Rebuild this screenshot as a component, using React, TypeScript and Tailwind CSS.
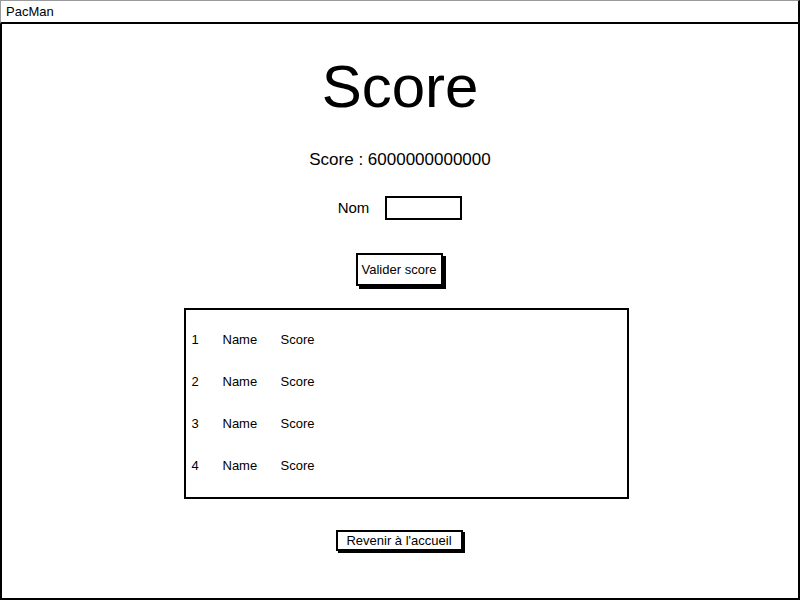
const FONT = { fontFamily: '"Liberation Sans", Arial, sans-serif' }

const ROWS = [1, 2, 3, 4]

export default function App() {
  return (
    <div className="w-[800px] h-[600px] bg-white text-black flex flex-col" style={FONT}>
      <div className="h-[24px] shrink-0 border-t border-l border-[#9a9a9a] border-r-2 border-r-black border-b-2 border-b-black flex items-center pl-[5px] text-[13px]">
        PacMan
      </div>
      <div className="flex-1 border-l-2 border-r-2 border-b-2 border-black flex flex-col items-center">
        <h1 className="mt-[31px] h-[64px] leading-[64px] text-[60px]">Score</h1>
        <p className="mt-[31px] h-[20px] leading-[20px] text-[17px]">Score : 6000000000000</p>
        <div className="mt-[26px] flex items-center gap-[16px]">
          <span className="text-[15px]">Nom</span>
          <input className="w-[77px] h-[24px] border-2 border-black bg-white outline-none px-1 text-[13px]" />
        </div>
        <button className="mt-[33px] w-[87px] h-[33px] border-2 border-black bg-white text-[13px] shadow-[3px_3px_0_#000] mr-[2px]">
          Valider score
        </button>
        <div className="mt-[22px] ml-[12px] w-[445px] h-[191px] border-2 border-black pt-[9px] pl-[6px] text-[13px]">
          {ROWS.map((n) => (
            <div key={n} className="h-[42px] flex items-center">
              <span className="w-[31px]">{n}</span>
              <span className="w-[58px]">Name</span>
              <span>Score</span>
            </div>
          ))}
        </div>
        <button className="mt-[31px] w-[127px] h-[21px] border-2 border-black bg-white text-[13px] leading-none shadow-[2px_2px_0_#000] mr-[2px]">
          Revenir à l'accueil
        </button>
      </div>
    </div>
  )
}
